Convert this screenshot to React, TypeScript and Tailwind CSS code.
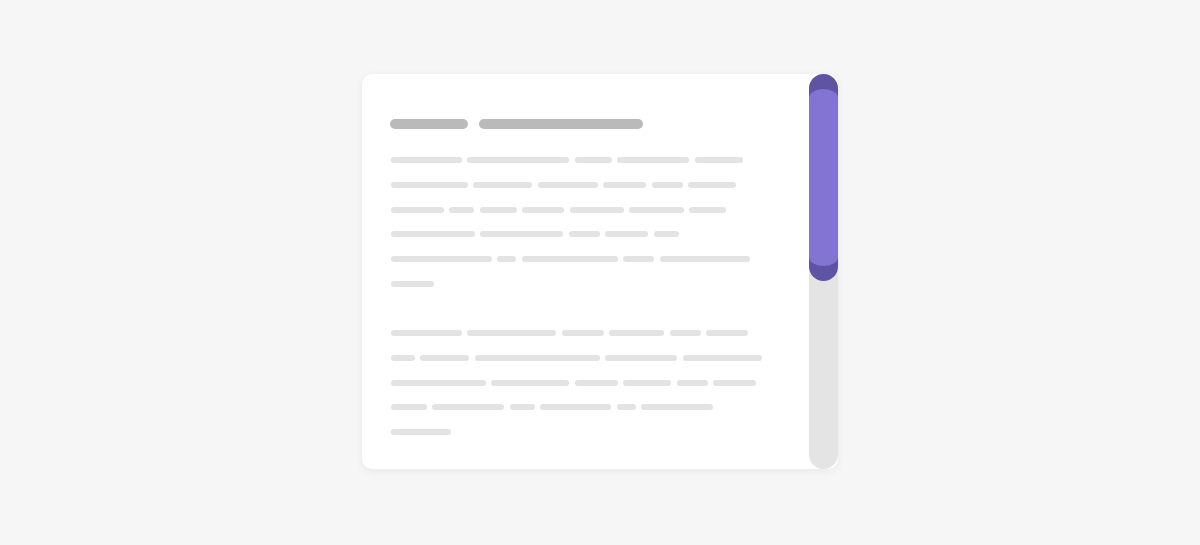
import React from 'react';

// Placeholder text lines, widths in px per row
const paragraphs: number[][][] = [
  [
    [71, 102, 37, 72, 48],
    [77, 59, 60, 43, 31, 48],
    [53, 25, 37, 42, 54, 55, 37],
    [84, 83, 31, 43, 25],
    [101, 19, 96, 31, 90],
    [43],
  ],
  [
    [71, 89, 42, 55, 31, 42],
    [24, 49, 125, 72, 79],
    [95, 78, 43, 48, 31, 43],
    [36, 72, 25, 71, 19, 72],
    [60],
  ],
];

function Paragraph({ rows, className = '' }: { rows: number[][]; className?: string }) {
  return (
    <div className={`ml-[1px] flex flex-col gap-[18.8px] ${className}`}>
      {rows.map((row, i) => (
        <div key={i} className="flex gap-[5.4px]">
          {row.map((w, j) => (
            <div key={j} className="h-[6px] rounded-full bg-[#e3e3e3]" style={{ width: w }} />
          ))}
        </div>
      ))}
    </div>
  );
}

export default function App() {
  return (
    <div className="flex h-[545px] w-full justify-center bg-[#f6f6f6] pt-[74px]">
      <div className="flex h-[395px] w-[476px] rounded-[10px] bg-white shadow-[0_2px_10px_rgba(0,0,0,0.06)]">
        <div className="flex-1 pl-[28px] pt-[45px]">
          <div className="flex gap-[11px]">
            <div className="h-[10px] w-[78px] rounded-full bg-[#bababa]" />
            <div className="h-[10px] w-[164px] rounded-full bg-[#bababa]" />
          </div>
          <Paragraph rows={paragraphs[0]} className="mt-[28px]" />
          <Paragraph rows={paragraphs[1]} className="mt-[43px]" />
        </div>

        {/* scrollbar */}
        <div className="flex w-[29px] flex-col rounded-full bg-[#e4e4e4]">
          <div className="flex h-[207px] flex-col rounded-full bg-[#5f53a4] py-[15px]">
            <div className="flex-1 rounded-[14px/9px] bg-[#8373d3]" />
          </div>
        </div>
      </div>
    </div>
  );
}
